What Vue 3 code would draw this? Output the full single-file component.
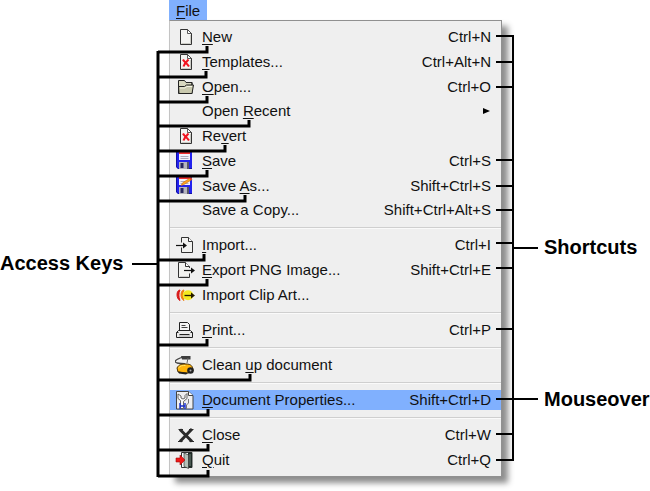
<template>
  <main class="figure">
    <div class="side side-left">
      <strong class="caption">Access Keys</strong>
    </div>

    <div class="menu-area">
      <button type="button" class="menu-title"><span class="key">F</span>ile</button>

      <ul class="menu">
        <template v-for="(group, g) in groups" :key="g">
          <li v-if="g > 0" class="separator" role="separator"></li>
          <li
            v-for="item in group"
            :key="item.id"
            class="row"
            :class="{ short: !item.icon }"
          >
            <button type="button" class="item" :class="{ hover: item.hover }">
              <svg class="icon" viewBox="0 0 20 20" aria-hidden="true">
                <template v-if="item.icon === 'page' || item.icon === 'broken'">
                  <path d="M5.500 2.500h7l4 4v11h-11z" fill="#f4f4f2" stroke="#333" />
                  <path d="M12.500 2.500v4h4z" fill="#fff" stroke="#333" stroke-width=".8" />
                  <path d="M15.500 8v8.500h-9" fill="none" stroke="#ccccc6" />
                  <path
                    v-if="item.icon === 'broken'"
                    d="M8 7.500c1 2 4 4 6 7M13.500 7.500c-2 2-4 4-5 7"
                    fill="none"
                    stroke="#f01420"
                    stroke-width="2.100"
                  />
                </template>
                <template v-else-if="item.icon === 'folder'">
                  <path d="M3.500 16.500v-13h6l1.500 2h6v4" fill="#d8d8c0" stroke="#222" />
                  <path d="M3.500 16.500h13.500v-11" fill="none" stroke="#222" />
                  <path d="M3.500 9.500h6l2-1.500h7l-1.500 8.500h-13z" fill="#c9c9ae" stroke="#222" />
                  <path d="M5 11h5l2-1.500h5" fill="none" stroke="#f4f4e4" />
                </template>
                <template v-else-if="item.icon === 'save' || item.icon === 'saveas'">
                  <path d="M1 1h16v17H3l-2-2z" fill="#2222ee" />
                  <path d="M1.500 1v15l2 1.500H17" fill="none" stroke="#1111a0" />
                  <path d="M4 2h11v7H4z" fill="#f2f2fa" />
                  <path d="M4 1h11v2H4z" fill="#f03030" />
                  <path d="M5.500 5.500h8M5.500 7.500h8" stroke="#9999aa" stroke-width=".8" />
                  <path d="M4 11h10v7H4z" fill="#b4b4be" />
                  <path d="M5.500 12h3v5h-3z" fill="#26265e" />
                  <path d="M12 11h2v7h-2z" fill="#555568" />
                  <template v-if="item.icon === 'saveas'">
                    <path d="M6 9.500l2-3 8-5 1 2-8 5z" fill="#ffa51e" stroke="#c86a10" stroke-width=".6" />
                    <path d="M14.500 2.300l1.500-1 1 2-1.300 1z" fill="#e03030" />
                  </template>
                </template>
                <template v-else-if="item.icon === 'import'">
                  <path d="M6.500 7.500v-5h7l4 4v11h-11v-5" fill="#f2f2f0" stroke="#333" />
                  <path d="M13.500 2.500v4h4" fill="#fff" stroke="#333" />
                  <path d="M1 10.500h8" stroke="#111" stroke-width="1.200" />
                  <path d="M8 7.500l4 3-4 3z" fill="#111" />
                </template>
                <template v-else-if="item.icon === 'export'">
                  <path d="M14.500 8v-1.500l-4-4h-7v15h11v-4" fill="#f2f2f0" stroke="#333" />
                  <path d="M10.500 2.500v4h4" fill="#fff" stroke="#333" />
                  <path d="M5 16.500h8.500" stroke="#ccc" />
                  <path d="M9 10.500h8" stroke="#111" stroke-width="1.200" />
                  <path d="M16 7.500l4 3-4 3z" fill="#111" />
                </template>
                <template v-else-if="item.icon === 'clipart'">
                  <path d="M5 5C1 5 1 14 5 15.500C3.500 12 3.500 8 5 5z" fill="#d81818" stroke="#d81818" />
                  <path d="M9 5C5 5 5 14 9 15.500C7.500 12 7.500 8 9 5z" fill="#f08010" stroke="#f08010" />
                  <ellipse cx="13" cy="10.300" rx="5.300" ry="5" fill="#f4e820" />
                  <path d="M9.500 10.500h8" stroke="#221a00" stroke-width="1.300" />
                  <path d="M16 7.500l4 3-4 3z" fill="#221a00" />
                </template>
                <template v-else-if="item.icon === 'print'">
                  <path d="M4.500 10.500v-8h8l2 2v6" fill="#f5f5f5" stroke="#222" />
                  <path d="M6.500 5.500h4M6.500 7.500h6" stroke="#444" />
                  <path d="M1.500 17.500v-5l2-2h12l2 2v5z" fill="#ececec" stroke="#222" />
                  <path d="M4 10.500h11M4.500 14.500h10M1.500 12.500h2M15.500 12.500h2" stroke="#222" />
                  <path d="M4 16h11" stroke="#aaa" />
                </template>
                <template v-else-if="item.icon === 'clean'">
                  <path d="M8 2C-1 5-1 7 2 8c4 1 9-1 8 3" fill="none" stroke="#444" stroke-width="1.300" />
                  <path d="M6 1h9.500v3.500H7z" fill="#3c3c3c" />
                  <path d="M13 3l-1 5" stroke="#666" />
                  <path d="M2 13c2-4 5-4 9-4 5 0 7 2 7 7l-5 2-10-1z" fill="#ffb40a" stroke="#4a3205" />
                  <path d="M3.500 13c2-2.500 4-2.500 7-2.500" fill="none" stroke="#ffe56a" />
                  <path d="M3 16.500l10 1.500-2 1.500-7-1z" fill="#222" />
                  <circle cx="15.500" cy="15.500" r="3.300" fill="#222" />
                  <circle cx="15.500" cy="15.500" r="1" fill="#aaa" />
                </template>
                <template v-else-if="item.icon === 'properties'">
                  <path d="M1.500 1.500h12l4.500 4v13.500h-16.500z" fill="#eeeef0" stroke="#444" />
                  <path d="M13.500 1.500v4h4.500" fill="#fff" stroke="#444" />
                  <path
                    d="M3 4v4.500l2.500 2v8h3v-7l3.500-3v-5l-2 2v2.500l-2 1-2-1V6z"
                    fill="#f8f8f8"
                    stroke="#555"
                    stroke-width=".9"
                  />
                  <path d="M13.500 9v4l-2 2v4" fill="none" stroke="#777" />
                  <path d="M5 13v6M10 13v6M5 16h5" fill="none" stroke="#1830d0" stroke-width="1.400" />
                </template>
                <template v-else-if="item.icon === 'close'">
                  <path d="M5 4.500l12 12M17 4L5 16.500" stroke="#2a2a2a" stroke-width="3" />
                  <path d="M3.500 4.500h4.500M14 4.500h4.500M3 16.500h4.500M14.500 16.500h4.500" stroke="#2a2a2a" />
                </template>
                <template v-else-if="item.icon === 'quit'">
                  <path d="M6.500 2.500h10.500v15H6.500z" fill="#fafafa" stroke="#333" />
                  <path d="M13 2.500h4v15h-4z" fill="#1e2a26" />
                  <path d="M9 3l4.500 2v13.500l-4.500-2z" fill="#b4c0b8" stroke="#333" stroke-width=".7" />
                  <path d="M15 4v12" stroke="#76857c" />
                  <path d="M1 8h4V5l5 5-5 5v-3H1z" fill="#f01818" stroke="#a00c0c" stroke-width=".6" />
                </template>
              </svg>
              <span class="label">{{ item.before }}<span class="key">{{ item.key }}</span>{{ item.after }}</span>
              <span v-if="item.shortcut" class="shortcut">{{ item.shortcut }}</span>
              <svg v-if="item.submenu" class="arrow" viewBox="0 0 8 8" aria-hidden="true">
                <path d="M0 1l7 3-7 3z" />
              </svg>
            </button>
          </li>
        </template>
      </ul>

      <!-- lines from the access keys to their caption -->
      <svg class="lines lines-left" width="140" height="480" aria-hidden="true">
        <path :d="keyLines" class="thick" />
        <path d="M0 264H25" />
      </svg>

      <!-- lines from the shortcuts to their captions -->
      <svg class="lines lines-right" width="44" height="480" aria-hidden="true">
        <path :d="shortcutLines" />
      </svg>
    </div>

    <div class="side side-right">
      <strong class="caption">Shortcuts</strong>
      <strong class="caption">Mouseover</strong>
    </div>
  </main>
</template>

<script setup>
const groups = [
  [
    { id: 'new', icon: 'page', before: '', key: 'N', after: 'ew', shortcut: 'Ctrl+N' },
    { id: 'templates', icon: 'broken', before: '', key: 'T', after: 'emplates...', shortcut: 'Ctrl+Alt+N' },
    { id: 'open', icon: 'folder', before: '', key: 'O', after: 'pen...', shortcut: 'Ctrl+O' },
    { id: 'recent', before: 'Open ', key: 'R', after: 'ecent', submenu: true },
    { id: 'revert', icon: 'broken', before: 'Re', key: 'v', after: 'ert' },
    { id: 'save', icon: 'save', before: '', key: 'S', after: 'ave', shortcut: 'Ctrl+S' },
    { id: 'saveas', icon: 'saveas', before: 'Save ', key: 'A', after: 's...', shortcut: 'Shift+Ctrl+S' },
    { id: 'copy', before: 'Save a Copy...', key: '', after: '', shortcut: 'Shift+Ctrl+Alt+S' },
  ],
  [
    { id: 'import', icon: 'import', before: '', key: 'I', after: 'mport...', shortcut: 'Ctrl+I' },
    { id: 'export', icon: 'export', before: '', key: 'E', after: 'xport PNG Image...', shortcut: 'Shift+Ctrl+E' },
    { id: 'clipart', icon: 'clipart', before: 'Import Clip Art...', key: '', after: '' },
  ],
  [{ id: 'print', icon: 'print', before: '', key: 'P', after: 'rint...', shortcut: 'Ctrl+P' }],
  [{ id: 'clean', icon: 'clean', before: 'Clean ', key: 'u', after: 'p document' }],
  [
    {
      id: 'properties',
      icon: 'properties',
      before: '',
      key: 'D',
      after: 'ocument Properties...',
      shortcut: 'Shift+Ctrl+D',
      hover: true,
    },
  ],
  [
    { id: 'close', icon: 'close', before: '', key: 'C', after: 'lose', shortcut: 'Ctrl+W' },
    { id: 'quit', icon: 'quit', before: '', key: 'Q', after: 'uit', shortcut: 'Ctrl+Q' },
  ],
];

// [x of the key, y of the line]
const keys = [
  [75, 52], [74, 77], [75, 102], [117, 126], [93, 151], [75, 176], [113, 201],
  [72, 260], [75, 285], [75, 345], [118, 380], [76, 415], [76, 450], [76, 476],
];
const keyLines =
  'M26 51V477' + keys.map(([x, y]) => `M26 ${y}H${x}V${y - 6}`).join('');

const shortcuts = [36, 62, 87, 160, 186, 210, 243, 268, 329, 434, 460];
const shortcutLines =
  'M18 35V461' +
  shortcuts.map((y) => `M1 ${y}H18`).join('') +
  'M18 248H43M1 399H43';
</script>

<style>
body {
  margin: 0;
  background: #fff;
}
</style>

<style scoped>
.figure {
  display: grid;
  grid-template-columns: 169fr 333fr 148fr;
  padding-bottom: 14px;
  font-family: 'Liberation Sans', Arial, sans-serif;
  font-size: 15px;
  color: #111;
}

.side {
  display: flex;
  flex-direction: column;
  white-space: nowrap;
}
.side-left {
  padding-top: 251px;
}
.side-right {
  padding-top: 235px;
  padding-left: 42px;
  gap: 128px;
}
.caption {
  font-size: 20px;
  line-height: 24px;
  color: #000;
}

.menu-area {
  position: relative;
}
.menu-title {
  display: block;
  height: 20px;
  padding: 2px 7px 0;
  border: none;
  background: #80b0fe;
  font: inherit;
  line-height: 18px;
  color: #111;
}
.key {
  text-decoration: underline;
  text-decoration-thickness: 1px;
  text-underline-offset: 2px;
}

.menu {
  margin: 0;
  padding: 3px 0 4px;
  list-style: none;
  background: #efefef;
  border: 1px solid #909090;
  border-left-color: #c4c4c4;
  box-shadow: 6px 6px 6px rgba(0, 0, 0, 0.45);
}
.row {
  display: flex;
  align-items: center;
  height: 25px;
}
.row.short {
  height: 24px;
}
.separator {
  height: 4px;
  margin-bottom: 4px;
  border-bottom: 1px solid #cfcfcf;
  box-shadow: 0 1px 0 #fafafa;
  padding-bottom: 1px;
}

.item {
  display: flex;
  align-items: center;
  width: 100%;
  height: 20px;
  padding: 0 10px 0 5px;
  border: none;
  background: none;
  font: inherit;
  line-height: 20px;
  color: #111;
  text-align: left;
}
.item.hover {
  background: #80b0fe;
}
.icon {
  flex: none;
  width: 20px;
  height: 20px;
  margin-right: 7px;
}
.label {
  flex: 1;
  white-space: pre;
}
.arrow {
  width: 8px;
  height: 8px;
}

.lines {
  position: absolute;
  top: 0;
  fill: none;
  stroke: #000;
  stroke-width: 2px;
  pointer-events: none;
}
.lines .thick {
  stroke-width: 3px;
}
.lines-left {
  left: -37px;
}
.lines-right {
  left: calc(100% - 7px);
}
</style>
